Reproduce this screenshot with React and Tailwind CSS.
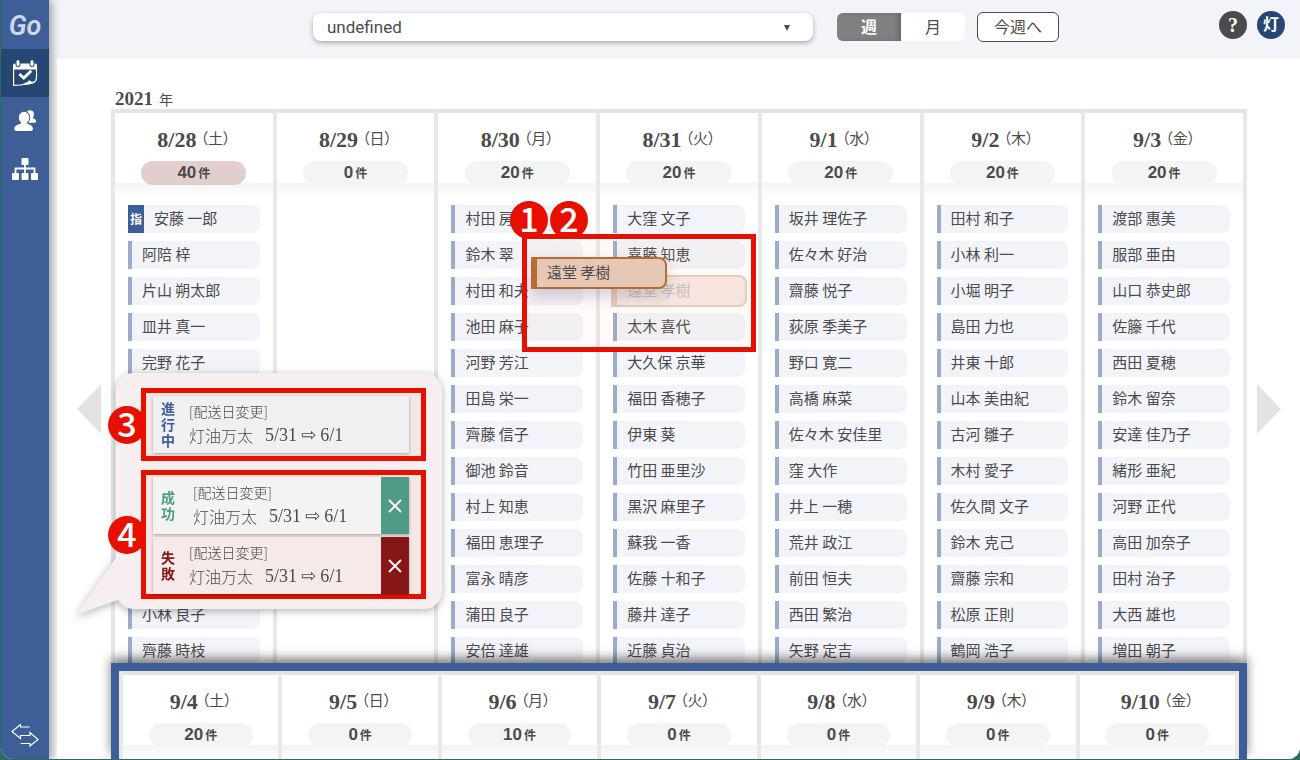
import clsx from 'clsx';

const weekOne = [
  {
    date: '8/28', day: '土', count: 40, busy: true,
    names: ['安藤 一郎', '阿陪 梓', '片山 朔太郎', '皿井 真一', '完野 花子', '', '', '', '', '', '', '小林 良子', '齊藤 時枝'],
  },
  { date: '8/29', day: '日', count: 0, names: [] },
  {
    date: '8/30', day: '月', count: 20,
    names: ['村田 房江', '鈴木 翠', '村田 和夫', '池田 麻子', '河野 芳江', '田島 栄一', '齊藤 信子', '御池 鈴音', '村上 知恵', '福田 恵理子', '富永 晴彦', '蒲田 良子', '安倍 達雄'],
  },
  {
    date: '8/31', day: '火', count: 20,
    names: ['大窪 文子', '嘉藤 知恵', '遠堂 孝樹', '太木 喜代', '大久保 京華', '福田 香穂子', '伊東 葵', '竹田 亜里沙', '黒沢 麻里子', '蘇我 一香', '佐藤 十和子', '藤井 達子', '近藤 貞治'],
  },
  {
    date: '9/1', day: '水', count: 20,
    names: ['坂井 理佐子', '佐々木 好治', '齋藤 悦子', '荻原 季美子', '野口 寛二', '高橋 麻菜', '佐々木 安佳里', '窪 大作', '井上 一穂', '荒井 政江', '前田 恒夫', '西田 繁治', '矢野 定吉'],
  },
  {
    date: '9/2', day: '木', count: 20,
    names: ['田村 和子', '小林 利一', '小堀 明子', '島田 力也', '井東 十郎', '山本 美由紀', '古河 雛子', '木村 愛子', '佐久間 文子', '鈴木 克己', '齋藤 宗和', '松原 正則', '鶴岡 浩子'],
  },
  {
    date: '9/3', day: '金', count: 20,
    names: ['渡部 惠美', '服部 亜由', '山口 恭史郎', '佐籐 千代', '西田 夏穂', '鈴木 留奈', '安達 佳乃子', '緒形 亜紀', '河野 正代', '高田 加奈子', '田村 治子', '大西 雄也', '増田 朝子'],
  },
];

const weekTwo = [
  { date: '9/4', day: '土', count: 20 },
  { date: '9/5', day: '日', count: 0 },
  { date: '9/6', day: '月', count: 10 },
  { date: '9/7', day: '火', count: 0 },
  { date: '9/8', day: '水', count: 0 },
  { date: '9/9', day: '木', count: 0 },
  { date: '9/10', day: '金', count: 0 },
];

const DESIGNATED = '安藤 一郎';
const DRAGGED = '遠堂 孝樹';

function CalendarIcon() {
  return (
    <svg width="26" height="28" viewBox="0 0 26 28" fill="none">
      <path d="M1 6.5Q1 4.500 3 4.500H23Q25 4.500 25 6.500V10.500H1Z" fill="#fff" />
      <path d="M6 2.500V5.500M20 2.500V5.500" stroke="#264773" strokeWidth="5" strokeLinecap="round" />
      <path d="M6 2.500V5.500M20 2.500V5.500" stroke="#fff" strokeWidth="3" strokeLinecap="round" />
      <path d="M1.600 10V26.400C6 26.400 12 25.600 19 24.500C23 23.700 24.500 22 24.500 18V10" stroke="#fff" strokeWidth="1.200" />
      <path d="M9 25.500C12.500 24.500 15.500 23 17.800 21C18.300 22.700 20 23 23 22.300C21 25 15 26.200 9 25.500Z" fill="#fff" />
      <path d="M7.300 15L11.800 19L19.300 11.800" stroke="#fff" strokeWidth="2.800" />
    </svg>
  );
}

function UsersIcon() {
  return (
    <svg width="24" height="24" viewBox="0 0 24 24" fill="#fff">
      <ellipse cx="17" cy="5.500" rx="3.900" ry="4.200" />
      <path d="M16 8H19.500C19.500 10 23.200 9.800 23.200 12.200Q23.200 13.800 21.500 13.800H13Z" />
      <ellipse cx="11" cy="8.700" rx="6.200" ry="6.900" fill="#3d5e96" />
      <ellipse cx="11" cy="8.700" rx="5.200" ry="5.900" />
      <path d="M8.500 13H13.500C13.500 16 20 15 20 19.800Q20 22 17.800 22H3.500Q1.200 22 1.200 19.800C1.200 15 8.500 16 8.500 13Z" />
    </svg>
  );
}

function TreeIcon() {
  return (
    <svg width="26" height="22" viewBox="0 0 26 22" fill="#fff">
      <rect x="9.500" width="7" height="7" rx="1" />
      <rect y="15" width="7" height="7" rx="1" />
      <rect x="9.500" y="15" width="7" height="7" rx="1" />
      <rect x="19" y="15" width="7" height="7" rx="1" />
      <path d="M13 7V15M3.500 15V10.500H22.500V15" fill="none" stroke="#fff" strokeWidth="1.800" />
    </svg>
  );
}

function SwapIcon() {
  return (
    <svg width="28" height="24" viewBox="0 0 28 24" fill="none" stroke="#fff" strokeWidth="1.200">
      <path d="M18.500 4H9.500V1.500L1 8.500L9.500 15.500V12.500H19V9.500L27 16.500L19 23V20.500H9.500" />
    </svg>
  );
}

function Sidebar() {
  return (
    <nav className="z-10 flex w-12 flex-none flex-col bg-[#3d5e96] shadow-[3px_0_8px_rgba(0,0,0,0.35)]">
      <div className="flex h-[49px] items-center justify-center pt-1 font-['Roboto',sans-serif] text-[27px] font-semibold italic text-[#cfd8e8]">Go</div>
      <button aria-label="カレンダー" className="flex h-12 items-center justify-center bg-[#264773]"><CalendarIcon /></button>
      <button aria-label="顧客" className="flex h-12 items-center justify-center"><UsersIcon /></button>
      <button aria-label="組織" className="flex h-12 items-center justify-center"><TreeIcon /></button>
      <button aria-label="切り替え" className="mt-auto flex h-12 items-center justify-center"><SwapIcon /></button>
    </nav>
  );
}

function Header() {
  return (
    <header className="grid h-[59px] flex-none grid-cols-[1fr_auto_1fr] items-center pb-[5px] pl-[23px]">
      <div />
      <div className="flex items-center">
        <div className="relative mr-6">
          <select
            aria-label="表示対象"
            className="block h-7 w-[500px] appearance-none rounded-lg bg-white pl-3.5 font-['Roboto',sans-serif] text-[17px] leading-7 shadow-[0_2px_5px_rgba(0,0,0,0.3)] outline-none"
          >
            <option>undefined</option>
          </select>
          <svg width="6" height="6" viewBox="0 0 6 6" className="pointer-events-none absolute right-[23px] top-3">
            <path d="M0 0H6L3 6Z" fill="#4b4b4b" />
          </svg>
        </div>
        <div className="mr-3 flex h-7 w-32 overflow-hidden rounded-md bg-white">
          <button className="flex-1 bg-[#808080] pb-0.5 font-bold text-white shadow-[inset_-3px_0_4px_rgba(0,0,0,0.2)]">週</button>
          <button className="flex-1 pb-0.5">月</button>
        </div>
        <button className="h-[30px] w-[82px] rounded-md border border-[#4b4b4b] bg-white pb-0.5">今週へ</button>
      </div>
      <div className="flex justify-end gap-2.5 pb-1 pr-[15px] font-['Liberation_Serif','Noto_Sans_CJK_JP',serif] font-bold text-white">
        <button className="h-7 w-7 rounded-full bg-[#4b4b4b] text-xl leading-7">?</button>
        <button className="h-7 w-7 rounded-full bg-[#264773] text-base leading-7">灯</button>
      </div>
    </header>
  );
}

function DayHead({ date, day, count, busy }) {
  return (
    <>
      <div className="flex h-[70px] flex-none flex-col items-center">
        <div className="flex h-12 flex-none items-center pt-1 font-['Liberation_Serif','Noto_Sans_CJK_JP',serif]">
          <span className="text-[22px] font-bold">{date}</span>
          <span className="ml-1 text-[15px] [font-feature-settings:'palt']">（{day}）</span>
        </div>
        <div
          className={clsx(
            "flex h-6 w-2/3 flex-none items-baseline justify-center gap-0.5 rounded-full font-['Liberation_Sans','Noto_Sans_CJK_JP',sans-serif] text-[17px] font-bold leading-6",
            busy ? 'z-[1] bg-[#e3cece]' : 'bg-[#f4f4f4]'
          )}
        >
          {count}
          <span className="text-xs">件</span>
        </div>
      </div>
      <div className="h-[22px] flex-none bg-linear-to-b from-[#f4f4f4] to-white to-70%" />
    </>
  );
}

function NameCard({ name }) {
  if (name === DRAGGED) {
    return (
      <li className="-m-0.5 flex h-8 flex-none items-center rounded-r-lg border-2 border-l-[6px] border-[#e8cdbb] bg-[#f6e9e4] pb-0.5 pl-2.5 text-[#c9c2c2]">
        {name}
      </li>
    );
  }
  if (name === DESIGNATED) {
    return (
      <li className="flex h-7 flex-none items-center rounded-r-lg bg-[#f3f4f9]">
        <span className="flex h-7 w-4 items-center justify-center bg-[#3d5e96] text-xs font-bold text-white">指</span>
        <span className="pb-0.5 pl-2.5">{name}</span>
      </li>
    );
  }
  return (
    <li className="flex h-7 flex-none items-center rounded-r-lg border-l-4 border-[#9baccb] bg-[#f3f4f9] pb-0.5 pl-2.5">
      {name}
    </li>
  );
}

function Week({ days }) {
  return (
    <div className="grid h-full grid-cols-7 border-l-4 border-[#e8e8e8]">
      {days.map((d) => (
        <section key={d.date} className="flex min-w-0 flex-col border-r-4 border-t-4 border-r-[#e8e8e8] border-t-[#e3e3e3] bg-white">
          <DayHead {...d} />
          <ul className="flex flex-col gap-2 px-[13px] text-[15px] leading-7">
            {d.names?.map((name, i) => <NameCard key={i} name={name} />)}
          </ul>
        </section>
      ))}
    </div>
  );
}

function Notice({ label, tone, bg, indent, closeBg }) {
  return (
    <div className={clsx('flex h-[57px] w-64 items-stretch shadow-[0_1px_3px_rgba(0,0,0,0.3)]', bg)}>
      <div className={clsx('flex w-[30px] flex-none flex-col items-center justify-center pb-0.5 text-sm font-bold leading-4', tone)}>
        {label.split('').map((c) => <span key={c}>{c}</span>)}
      </div>
      <div className={clsx('flex flex-1 flex-col justify-center whitespace-nowrap pb-1', indent)}>
        <p className="text-sm font-light leading-6">[配送日変更]</p>
        <p className="flex items-center text-base leading-6">
          <span className="font-light">灯油万太</span>
          <span className="ml-3 font-['Liberation_Serif',serif] text-lg leading-6">5/31</span>
          <span className="mx-1 font-['DejaVu_Sans',sans-serif] text-lg leading-6">⇨</span>
          <span className="font-['Liberation_Serif',serif] text-lg leading-6">6/1</span>
        </p>
      </div>
      {closeBg && (
        <button aria-label="閉じる" className={clsx('flex w-7 flex-none items-center justify-center', closeBg)}>
          <svg width="14" height="14" viewBox="0 0 14 14" stroke="#fff" strokeWidth="1.800">
            <path d="M1 1L13 13M13 1L1 13" />
          </svg>
        </button>
      )}
    </div>
  );
}

function NoticeBubble() {
  return (
    <div className="absolute left-[116px] top-[373px] z-20 drop-shadow-[0_2px_4px_rgba(0,0,0,0.3)]">
      <svg width="50" height="64" viewBox="0 0 50 64" className="absolute -left-10 top-[179px]">
        <path d="M0 63L44 0V47Z" fill="#f7eef0" />
      </svg>
      <div className="relative flex w-[326px] flex-col gap-[9px] rounded-[18px] bg-[#f7eef0] pb-2.5 pl-[25px] pt-[15px]">
        <div className="w-[285px] border-[5px] border-[#e71000] bg-[#f5e7e4] px-[7px] py-[3px]">
          <Notice label="進行中" tone="text-[#3d5e96]" bg="bg-[#f0f0f3]" indent="pl-1.5" />
        </div>
        <div className="flex w-[285px] flex-col gap-[3px] border-[5px] border-[#e71000] bg-[#f5e7e4] px-[7px] pt-0.5">
          <Notice label="成功" tone="text-[#4f9b85]" bg="bg-[#f3f3f3]" indent="pl-2.5" closeBg="bg-[#4f9b85]" />
          <Notice label="失敗" tone="text-[#861618]" bg="bg-[#f5e9e9]" indent="pl-1.5" closeBg="bg-[#861618]" />
        </div>
      </div>
    </div>
  );
}

function Marker({ n, place }) {
  return (
    <span
      className={clsx(
        'absolute z-30 flex h-[38px] w-[38px] items-center justify-center rounded-full bg-[#e71000] pb-1 text-[34px] font-medium leading-none text-white',
        place
      )}
    >
      {n}
    </span>
  );
}

export default function App() {
  return (
    <div className="h-screen overflow-hidden bg-[#2c6f60] pb-px pl-px font-['Noto_Sans_CJK_JP',sans-serif] text-base text-[#4b4b4b]">
      <div className="flex h-full overflow-hidden rounded-b-xl bg-[#f3f4f9]">
        <Sidebar />
        <div className="flex min-w-0 flex-1 flex-col">
          <Header />
          <main className="z-10 ml-2 flex min-h-0 flex-1 items-center bg-white">
            <button aria-label="前の週" className="flex w-[54px] flex-none justify-end pr-2.5">
              <svg width="24" height="50" viewBox="0 0 24 50"><path d="M24 0V50L0 25Z" fill="#e3e3e3" /></svg>
            </button>
            <div className="flex h-full min-w-0 flex-1 flex-col">
              <h1 className="flex h-[50px] flex-none items-baseline pl-1 pt-7 font-['Liberation_Serif','Noto_Sans_CJK_JP',serif] leading-6">
                <span className="text-[19px] font-bold">2021</span>
                <span className="ml-1.5 text-sm">年</span>
              </h1>
              <div className="min-h-0 flex-1 overflow-hidden">
                <Week days={weekOne} />
              </div>
              <div className="z-[2] h-24 flex-none overflow-hidden border-8 border-b-0 border-[#3d5e96] shadow-[0_-5px_10px_rgba(0,0,0,0.5)]">
                <Week days={weekTwo} />
              </div>
            </div>
            <button aria-label="次の週" className="flex w-[53px] flex-none pl-2.5">
              <svg width="24" height="50" viewBox="0 0 24 50"><path d="M0 0V50L24 25Z" fill="#e3e3e3" /></svg>
            </button>
          </main>
        </div>
      </div>

      <div className="absolute left-[522px] top-[234px] z-20 h-[118px] w-[234px] border-[5px] border-[#e71000] bg-[#e8a070]/5">
        <div className="ml-1 mt-[18px] flex h-8 w-[136px] items-center rounded-r-lg border-2 border-l-[6px] border-[#b96c31] bg-[#e6c8b4] pb-0.5 pl-2.5 text-[15px] shadow-[0_8px_14px_rgba(60,60,120,0.2)]">
          遠堂 孝樹
        </div>
      </div>
      <NoticeBubble />
      <Marker n="1" place="left-[510px] top-[201px]" />
      <Marker n="2" place="left-[550px] top-[201px]" />
      <Marker n="3" place="left-[108px] top-[406px]" />
      <Marker n="4" place="left-[108px] top-[516px]" />
    </div>
  );
}
